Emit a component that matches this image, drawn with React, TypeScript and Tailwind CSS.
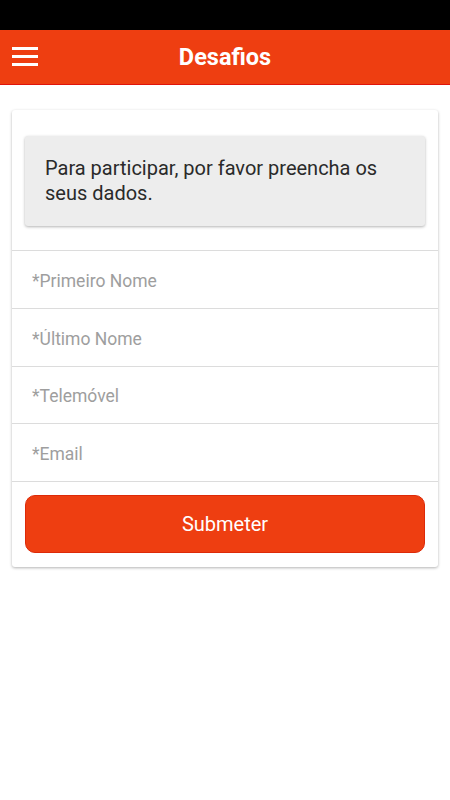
import React from 'react'

const fields = ['*Primeiro Nome', '*Último Nome', '*Telemóvel', '*Email']

export default function App() {
  return (
    <div className="min-h-[800px] bg-white font-['Roboto','Liberation_Sans',sans-serif]">
      {/* status bar */}
      <div className="h-[30px] bg-black" />

      {/* toolbar */}
      <header className="relative flex h-[55px] items-center justify-center border-b border-[#e0140a] bg-[#ee3e11]">
        <button type="button" aria-label="Menu" className="absolute left-3 top-[17px] flex w-[26px] flex-col gap-[5px]">
          <span className="h-[3px] w-full bg-white" />
          <span className="h-[3px] w-full bg-white" />
          <span className="h-[3px] w-full bg-white" />
        </button>
        <h1 className="pt-[2px] text-[23.5px] font-bold text-white">Desafios</h1>
      </header>

      {/* card */}
      <section className="mx-3 mt-[25px] rounded-[3px] bg-white shadow-[0_1px_3px_rgba(0,0,0,0.3)]">
        <div className="px-[13px] pb-6 pt-[26px]">
          <div className="rounded-[3px] bg-[#ededed] px-5 py-5 text-[20px] leading-[25px] text-[#2a2a2a] shadow-[0_1px_3px_rgba(0,0,0,0.3)]">
            Para participar, por favor preencha os seus dados.
          </div>
        </div>

        {fields.map((f) => (
          <div key={f} className="border-t border-[#dcdcdc]">
            <input
              placeholder={f}
              className="h-[56.75px] w-full bg-transparent px-5 pt-[3px] text-[17.5px] text-[#333] outline-none placeholder:text-[#9e9e9e]"
            />
          </div>
        ))}

        <div className="border-t border-[#dcdcdc] px-[13px] pb-[14px] pt-[13px]">
          <button
            type="button"
            className="flex h-[58px] w-full items-center justify-center rounded-[10px] border border-[#dd2a08] bg-[#ee3e11] text-[20px] text-white"
          >
            Submeter
          </button>
        </div>
      </section>
    </div>
  )
}
